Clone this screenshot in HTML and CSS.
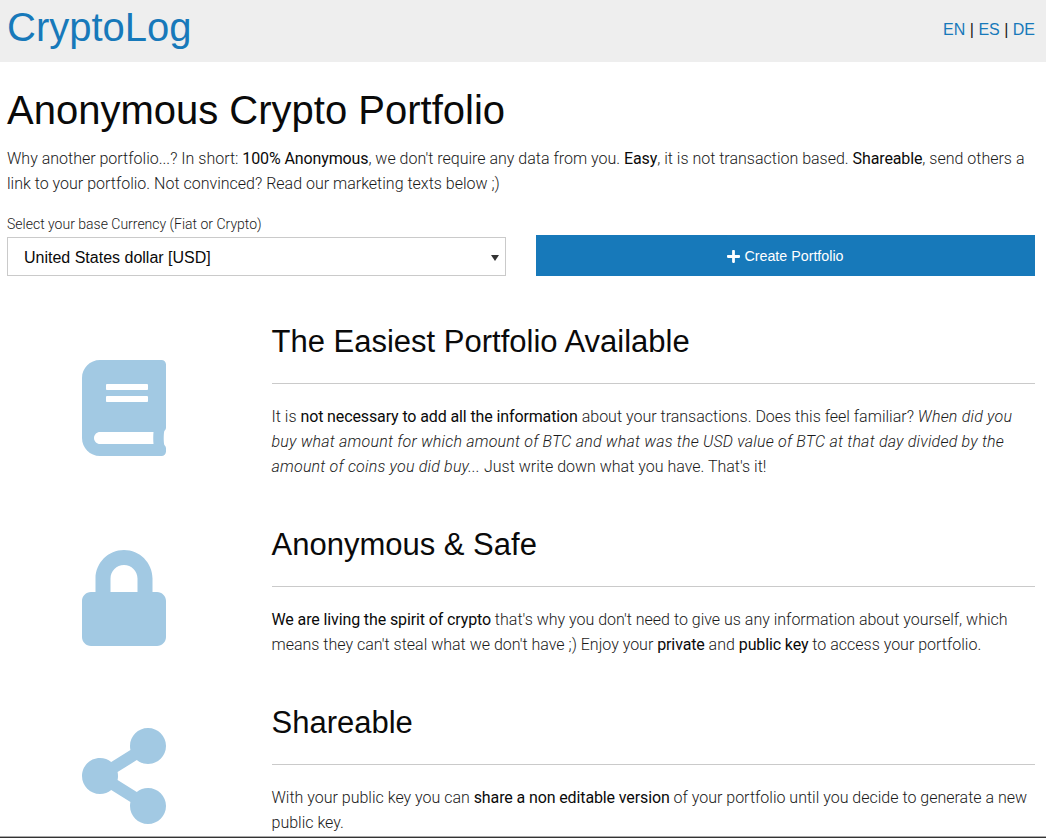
FILE: index.html
```html
<!DOCTYPE html>
<html lang="en">
<head>
    <meta charset="UTF-8">
    <title>CryptoLog</title>
    <link rel="stylesheet" href="styles.css">
</head>
<body>
    <div class="top-bar">
        <a class="logo" href="#">CryptoLog</a>
        <div class="lang"><a href="#">EN</a> | <a href="#">ES</a> | <a href="#">DE</a></div>
    </div>

    <div class="content">
        <h1>Anonymous Crypto Portfolio</h1>
        <p class="intro">Why another portfolio...? In short: <strong>100% Anonymous</strong>, we don't require any data from you. <strong>Easy</strong>, it is not transaction based. <strong>Shareable</strong>, send others a link to your portfolio. Not convinced? Read our marketing texts below ;)</p>

        <div class="create-row">
            <label class="currency">Select your base Currency (Fiat or Crypto)
                <span class="select-wrap">
                    <select>
                        <option>United States dollar [USD]</option>
                    </select>
                </span>
            </label>
            <a class="button" href="#">
                <svg class="plus" viewBox="0 0 448 512"><path d="M416 208H272V64c0-17.67-14.33-32-32-32h-32c-17.67 0-32 14.33-32 32v144H32c-17.67 0-32 14.33-32 32v32c0 17.67 14.33 32 32 32h144v144c0 17.67 14.33 32 32 32h32c17.67 0 32-14.33 32-32V304h144c17.67 0 32-14.33 32-32v-32c0-17.67-14.33-32-32-32z"/></svg>
                Create Portfolio
            </a>
        </div>

        <div class="feature">
            <div class="feature-icon">
                <svg viewBox="0 0 448 512"><path d="M448 360V24c0-13.3-10.7-24-24-24H96C43 0 0 43 0 96v320c0 53 43 96 96 96h328c13.3 0 24-10.7 24-24v-16c0-7.5-3.5-14.3-8.9-18.7-4.2-15.4-4.2-59.3 0-74.7 5.4-4.3 8.9-11.1 8.9-18.6zM128 134c0-3.3 2.7-6 6-6h212c3.3 0 6 2.7 6 6v20c0 3.3-2.7 6-6 6H134c-3.3 0-6-2.7-6-6v-20zm0 64c0-3.3 2.7-6 6-6h212c3.3 0 6 2.7 6 6v20c0 3.3-2.7 6-6 6H134c-3.3 0-6-2.7-6-6v-20zm253.4 250H96c-17.7 0-32-14.3-32-32 0-17.6 14.4-32 32-32h285.4c-1.9 17.1-1.9 46.9 0 64z"/></svg>
            </div>
            <div>
                <h2>The Easiest Portfolio Available</h2>
                <hr>
                <p>It is <strong>not necessary to add all the information</strong> about your transactions. Does this feel familiar? <em>When did you buy what amount for which amount of BTC and what was the USD value of BTC at that day divided by the amount of coins you did buy...</em> Just write down what you have. That's it!</p>
            </div>
        </div>

        <div class="feature">
            <div class="feature-icon">
                <svg viewBox="0 0 448 512"><path d="M400 224h-24v-72C376 68.2 307.8 0 224 0S72 68.2 72 152v72H48c-26.5 0-48 21.5-48 48v192c0 26.5 21.5 48 48 48h352c26.5 0 48-21.5 48-48V272c0-26.5-21.5-48-48-48zm-104 0H152v-72c0-39.7 32.3-72 72-72s72 32.3 72 72v72z"/></svg>
            </div>
            <div>
                <h2>Anonymous &amp; Safe</h2>
                <hr>
                <p><strong>We are living the spirit of crypto</strong> that's why you don't need to give us any information about yourself, which means they can't steal what we don't have ;) Enjoy your <strong>private</strong> and <strong>public key</strong> to access your portfolio.</p>
            </div>
        </div>

        <div class="feature">
            <div class="feature-icon">
                <svg viewBox="0 0 448 512"><path d="M352 320c-22.608 0-43.387 7.819-59.79 20.895l-102.486-64.054a96.551 96.551 0 0 0 0-41.683l102.486-64.054C308.613 184.181 329.392 192 352 192c53.019 0 96-42.981 96-96S405.019 0 352 0s-96 42.981-96 96c0 7.158.79 14.13 2.276 20.841L155.79 180.895C139.387 167.819 118.608 160 96 160c-53.019 0-96 42.981-96 96s42.981 96 96 96c22.608 0 43.387-7.819 59.79-20.895l102.486 64.054A96.301 96.301 0 0 0 256 416c0 53.019 42.981 96 96 96s96-42.981 96-96-42.981-96-96-96z"/></svg>
            </div>
            <div>
                <h2>Shareable</h2>
                <hr>
                <p>With your public key you can <strong>share a non editable version</strong> of your portfolio until you decide to generate a new public key.</p>
            </div>
        </div>
    </div>

    <div class="bottom-line"></div>
</body>
</html>
```

FILE: styles.css
```css
html, body {
    height: 838px;
    overflow: hidden;
}
body {
    margin: 0;
    font-family: Roboto, sans-serif;
    font-weight: 300;
    font-size: 16px;
    line-height: 25px;
    color: #1a1a1a;
    background-color: #fff;
}
a {
    color: #1779ba;
    text-decoration: none;
}
strong {
    font-weight: 400;
    letter-spacing: -0.12px;
    color: #0a0a0a;
}
em {
    letter-spacing: 0.2px;
}
.top-bar {
    height: 62px;
    display: flex;
    justify-content: space-between;
    padding: 0 11px 0 7px;
    background-color: #eee;
    font-family: "Liberation Sans", Arial, sans-serif;
    font-weight: 400;
}
.logo {
    font-size: 40px;
    line-height: 55px;
}
.lang {
    line-height: 60px;
}
.content {
    padding: 0 11px 0 7px;
}
h1 {
    margin: 25px 0 0;
    font-family: "Liberation Sans", Arial, sans-serif;
    font-weight: 400;
    font-size: 40px;
    line-height: 46px;
    color: #0a0a0a;
}
.intro {
    margin: 13px 0 0;
}
.create-row {
    display: grid;
    grid-template-columns: 1fr 1fr;
    gap: 30px;
    align-items: end;
    margin: 18px 0 20px;
}
.currency {
    display: block;
    font-size: 14px;
    line-height: 20px;
}
.select-wrap {
    display: block;
    position: relative;
    margin-top: 3px;
}
.select-wrap::after {
    content: "";
    position: absolute;
    top: 18px;
    right: 7px;
    border-style: solid;
    border-width: 6px 4px 0;
    border-color: #333 transparent transparent;
}
select {
    display: block;
    width: 100%;
    height: 39px;
    padding: 1px 0 0 16px;
    border: 1px solid #cacaca;
    border-radius: 0;
    background-color: #fff;
    color: #0a0a0a;
    font-family: "Liberation Sans", Arial, sans-serif;
    font-size: 16px;
    appearance: none;
}
.button {
    display: flex;
    justify-content: center;
    align-items: center;
    gap: 4px;
    height: 40px;
    padding-top: 1px;
    background-color: #1779ba;
    color: #fff;
    font-family: "Liberation Sans", Arial, sans-serif;
    font-weight: 400;
    font-size: 14.25px;
}
.plus {
    width: 13px;
    height: 15px;
    fill: #fff;
}
.feature {
    display: grid;
    grid-template-columns: 234.5px 1fr;
    gap: 30px;
    margin-top: 22px;
}
.create-row + .feature {
    margin-top: 41px;
}
.feature-icon {
    display: flex;
    justify-content: center;
    align-items: center;
}
.feature-icon svg {
    width: 84px;
    height: 96px;
    fill: #a2c9e3;
}
h2 {
    margin: 0;
    font-family: "Liberation Sans", Arial, sans-serif;
    font-weight: 400;
    font-size: 31px;
    line-height: 50px;
    color: #0a0a0a;
}
hr {
    margin: 16px 0 20px;
    border: 0;
    border-top: 1px solid #cacaca;
}
.feature p {
    margin: 0 0 19px;
}
.bottom-line {
    position: fixed;
    left: 0;
    right: 0;
    bottom: 0;
    height: 1px;
    border-top: 1px solid #aaa;
    background-color: #333;
}
```
